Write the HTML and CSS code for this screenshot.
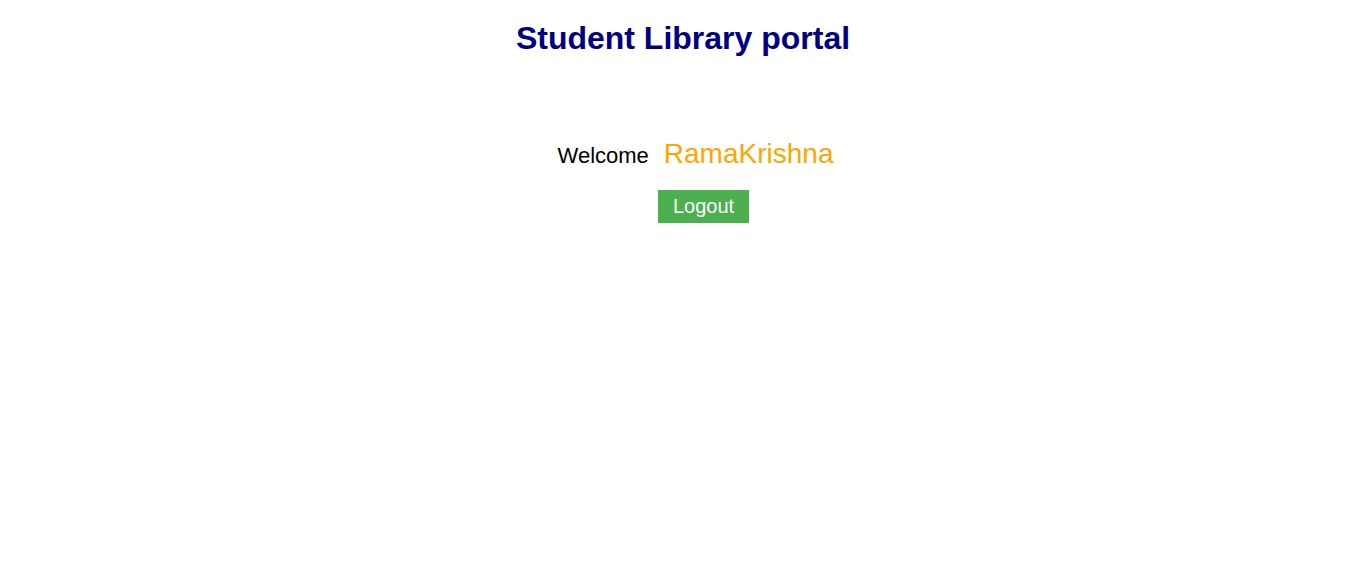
FILE: index.html
```html
<!DOCTYPE html>
<html>
<head>
<meta charset="utf-8">
<link rel="stylesheet" href="styles.css">
</head>
<body>
<h1 class="title">Student Library portal</h1>
<div class="welcome">
  <span class="welcome-label">Welcome</span>
  <span class="user-name">RamaKrishna</span>
</div>
<div class="actions">
  <button class="logout">Logout</button>
</div>
</body>
</html>
```
FILE: styles.css
```css
body {
  margin: 0;
  font-family: "Liberation Sans", Arial, sans-serif;
  background: #fff;
}
.title {
  margin: 20px 0 0;
  text-align: center;
  font-size: 32px;
  font-weight: bold;
  color: #000080;
  line-height: 37px;
}
.welcome {
  margin-top: 81px;
  display: flex;
  justify-content: center;
  align-items: baseline;
  gap: 15px;
  padding-left: 25px;
}
.welcome-label {
  font-size: 22px;
  color: #000;
}
.user-name {
  font-size: 28px;
  color: #ffa500;
}
.actions {
  margin-top: 20px;
  display: flex;
  justify-content: center;
  padding-left: 41px;
}
.logout {
  background: #4caf50;
  color: #fff;
  border: none;
  font-family: "Liberation Sans", Arial, sans-serif;
  font-size: 20px;
  width: 91px;
  height: 33px;
  padding: 0;
}
```
